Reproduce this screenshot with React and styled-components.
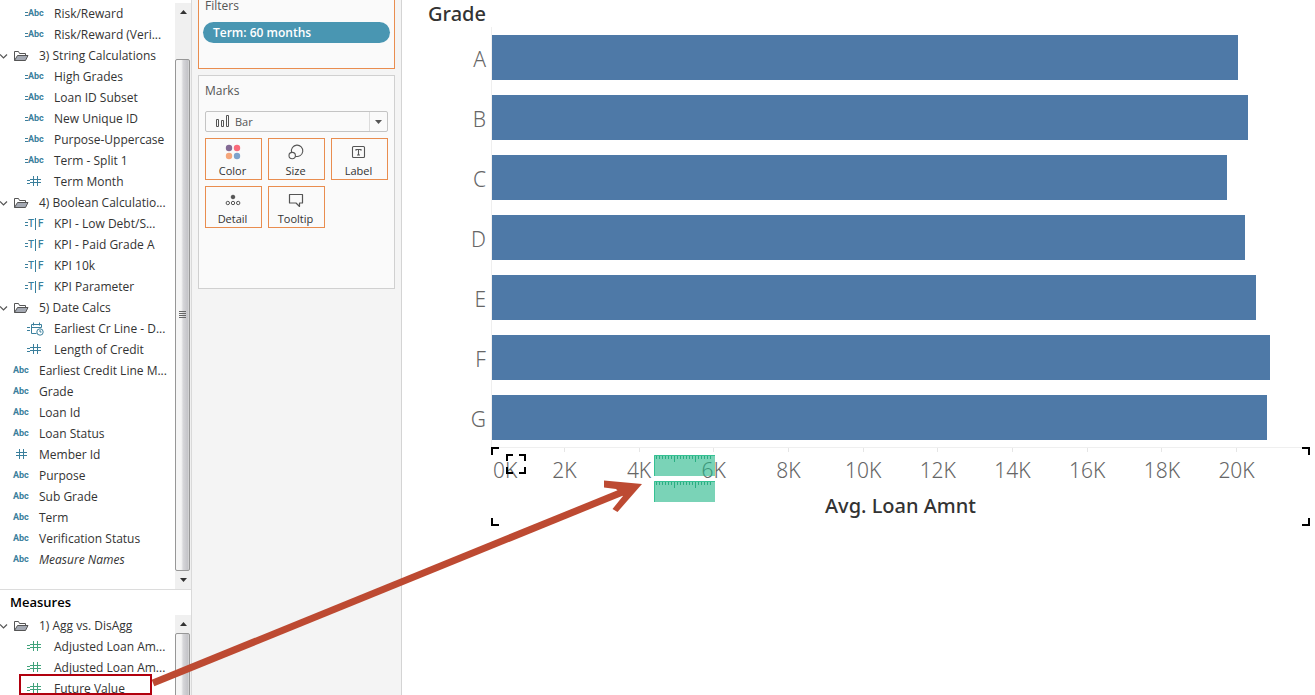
import React from "react";
import styled, { createGlobalStyle, css } from "styled-components";

const GlobalStyle = createGlobalStyle`
  *, *::before, *::after { box-sizing: border-box; }
  html, body { margin: 0; background: #fff; }
  body { font-family: "Open Sans", "Noto Sans", sans-serif; font-size: 12px; color: #333; overflow: hidden; }
  button, select { font: inherit; color: inherit; }
`;

const TEAL = "#3a7f9c";
const GREEN = "#41a37c";
const ORANGE = "#e98d4f";

const Page = styled.div`
  position: relative;
  display: flex;
  height: 100vh;
  overflow: hidden;
`;

/* ---------- data pane ---------- */

const DataPane = styled.aside`
  display: flex;
  flex-direction: column;
  flex: 0 0 192px;
  border-right: 1px solid #d9d9d9;
`;

const FieldSection = styled.section`
  display: flex;
  flex: none;
  padding-top: ${(p) => p.$top}px;
`;

const SectionTitle = styled.h2`
  flex: none;
  margin: 0;
  padding-left: 10px;
  border-top: 1px solid #dcdcdc;
  font-size: 13px;
  font-weight: 600;
  line-height: 25px;
  color: #000;
`;

const FieldList = styled.ul`
  flex: 1;
  min-width: 0;
  margin: 0;
  padding: 0 0 19px;
  list-style: none;
`;

const FieldItem = styled.li`
  position: relative;
  display: flex;
  align-items: center;
  height: 21px;
  padding-left: ${(p) => p.$indent}px;
  white-space: nowrap;
  font-style: ${(p) => (p.$italic ? "italic" : "normal")};
`;

const TypeIcon = styled.span`
  display: flex;
  align-items: center;
  flex: 0 0 ${(p) => (p.$nested ? 30 : 26)}px;
  color: ${(p) => p.$color};
  font: 700 9px/21px Roboto, sans-serif;
`;

const FolderButton = styled.button`
  display: flex;
  align-items: center;
  padding: 0;
  border: 0;
  background: none;
  svg { flex: none; margin-right: 6px; }
  svg + svg { margin-right: 10px; }
`;

const Highlight = styled.span`
  position: absolute;
  top: -4px;
  left: 19px;
  width: 133px;
  height: 21px;
  border: 2px solid #b1000e;
`;

const Scrollbar = styled.div`
  display: flex;
  flex-direction: column;
  flex: 0 0 16px;
  background: #f0f0f0;
`;

const ScrollArrow = styled.button`
  display: flex;
  align-items: center;
  justify-content: center;
  height: 18px;
  padding: 0;
  border: 0;
  background: #f0f0f0;
`;

const ScrollThumb = styled.div`
  display: flex;
  align-items: center;
  justify-content: center;
  flex: 1;
  margin: ${(p) => p.$before}px 1px 0 0;
  border: 1px solid #979797;
  border-radius: 2px;
  background: linear-gradient(90deg, #f5f5f5 0 40%, #d6d6d9 55%, #c4c4c8 90%, #dcdcdc);
`;

const Spacer = styled.i`
  width: ${(p) => (p.$wide ? 3 : 2)}px;
`;

const BarSeparator = styled.i`
  width: 1px;
  height: 12px;
  margin: 0 2px 0 1px;
  background: currentColor;
`;

const Letters = styled.span`
  font-weight: ${(p) => (p.$thin ? 500 : 700)};
  font-size: ${(p) => (p.$thin ? 10 : 9)}px;
`;

const Equals = () => (
  <svg width="4" height="7" viewBox="0 0 4 7" aria-hidden="true">
    <path d="M1 2.5h3M1 5.5h3" stroke="currentColor" />
  </svg>
);

const HashIcon = () => (
  <svg width="11" height="11" viewBox="0 0 11 11" aria-hidden="true">
    <path d="M3.5 0v10M7.5 0v10M0 3.5h11M0 6.5h11" stroke="currentColor" fill="none" />
  </svg>
);

const DateIcon = () => (
  <svg width="14" height="14" viewBox="0 0 14 14" fill="none" stroke="currentColor" aria-hidden="true">
    <path d="M6.5 11.5h-5v-9h10v3M1.5 5.5h10M3.5.5v3M9.5.5v3" />
    <circle cx="10" cy="10" r="3.2" />
    <path d="M10 8v2h1.5" />
  </svg>
);

function FieldIcon({ type, nested, color }) {
  return (
    <TypeIcon $nested={nested} $color={color}>
      {nested && (type === "hash" || type === "date") && <Spacer />}
      {nested && <Equals />}
      {!nested && type === "hash" && <Spacer $wide />}
      {type === "abc" && <Letters>Abc</Letters>}
      {type === "hash" && <HashIcon />}
      {type === "date" && <DateIcon />}
      {type === "bool" && (
        <>
          <Letters $thin>T</Letters>
          <BarSeparator />
          <Letters $thin>F</Letters>
        </>
      )}
    </TypeIcon>
  );
}

const Folder = ({ children }) => (
  <FieldItem $indent={0}>
    <FolderButton type="button">
      <svg width="8" height="8" viewBox="0 0 8 8" aria-hidden="true">
        <path d="M0 2.5l3.5 3.5L7 2.5" fill="none" stroke="#555" strokeWidth="1.2" />
      </svg>
      <svg width="15" height="12" viewBox="0 0 15 12" aria-hidden="true">
        <path d="M.5 10.5v-9h4l1 2h6v1.5" fill="none" stroke="#555" />
        <path d="M3.500 5.500h10.500l-2.500 5h-11z" fill="#a4a9b3" stroke="#555" />
      </svg>
      {children}
    </FolderButton>
  </FieldItem>
);

const UpArrow = () => (
  <ScrollArrow type="button" aria-label="Scroll up">
    <svg width="7" height="4" viewBox="0 0 7 4"><path d="M0 4l3.5-4L7 4z" fill="#333" /></svg>
  </ScrollArrow>
);

const DownArrow = () => (
  <ScrollArrow type="button" aria-label="Scroll down">
    <svg width="7" height="4" viewBox="0 0 7 4"><path d="M0 0h7L3.5 4z" fill="#333" /></svg>
  </ScrollArrow>
);

const dimensions = [
  ["abc", "Risk/Reward", true],
  ["abc", "Risk/Reward (Veri...", true],
  ["folder", "3) String Calculations"],
  ["abc", "High Grades", true],
  ["abc", "Loan ID Subset", true],
  ["abc", "New Unique ID", true],
  ["abc", "Purpose-Uppercase", true],
  ["abc", "Term - Split 1", true],
  ["hash", "Term Month", true],
  ["folder", "4) Boolean Calculatio..."],
  ["bool", "KPI - Low Debt/S...", true],
  ["bool", "KPI - Paid Grade A", true],
  ["bool", "KPI 10k", true],
  ["bool", "KPI Parameter", true],
  ["folder", "5) Date Calcs"],
  ["date", "Earliest Cr Line - D...", true],
  ["hash", "Length of Credit", true],
  ["abc", "Earliest Credit Line M..."],
  ["abc", "Grade"],
  ["abc", "Loan Id"],
  ["abc", "Loan Status"],
  ["hash", "Member Id"],
  ["abc", "Purpose"],
  ["abc", "Sub Grade"],
  ["abc", "Term"],
  ["abc", "Verification Status"],
  ["abc", "Measure Names"],
];

const measures = [
  ["folder", "1) Agg vs. DisAgg"],
  ["hash", "Adjusted Loan Am...", true],
  ["hash", "Adjusted Loan Am...", true],
  ["hash", "Future Value", true],
];

function Fields({ items, color }) {
  return (
    <FieldList>
      {items.map(([type, name, nested], i) =>
        type === "folder" ? (
          <Folder key={i}>{name}</Folder>
        ) : (
          <FieldItem key={i} $indent={nested ? 24 : 13} $italic={name === "Measure Names"}>
            <FieldIcon type={type} nested={nested} color={color} />
            {name}
            {name === "Future Value" && <Highlight />}
          </FieldItem>
        )
      )}
    </FieldList>
  );
}

/* ---------- shelves ---------- */

const Shelves = styled.div`
  display: flex;
  flex-direction: column;
  gap: 6px;
  flex: 0 0 210px;
  padding: 0 6px;
  border-right: 1px solid #d4d4d4;
  background: #f4f4f4;
`;

const Card = styled.section`
  flex: none;
  border: 1px solid #d0d0d0;
  background: #fafafa;
  ${(p) =>
    p.$active
      ? css`
          height: 69px;
          padding: 0 4px;
          border-color: ${ORANGE};
          border-top: 0;
        `
      : css`
          height: 214px;
          padding: 6px;
        `}
`;

const CardTitle = styled.h3`
  margin: 0 0 ${(p) => (p.$compact ? 10 : 11)}px;
  padding-left: ${(p) => (p.$compact ? 2 : 0)}px;
  font-size: 12px;
  font-weight: 400;
  line-height: ${(p) => (p.$compact ? 12 : 18)}px;
  color: #555;
`;

const Pill = styled.button`
  display: block;
  width: 100%;
  height: 21px;
  padding: 0 10px;
  border: 0;
  border-radius: 11px;
  background: #4996b2;
  color: #fff;
  font-weight: 600;
  line-height: 21px;
  text-align: left;
`;

const MarkTypeField = styled.label`
  position: relative;
  display: block;
  height: 21px;
  margin-bottom: 6px;
  svg { position: absolute; pointer-events: none; }
  svg:first-of-type { left: 10px; top: 4px; }
  svg:last-of-type { right: 6px; top: 9px; }
  &::after {
    content: "";
    position: absolute;
    right: 18px;
    top: 1px;
    bottom: 1px;
    border-left: 1px solid #dcdcdc;
  }
`;

const MarkTypeSelect = styled.select`
  display: block;
  width: 100%;
  height: 21px;
  padding: 0 20px 0 29px;
  appearance: none;
  border: 1px solid #c4c4c4;
  border-radius: 2px;
  background: #fafafa;
  color: #555;
  font-size: 11px;
`;

const MarkGrid = styled.div`
  display: grid;
  grid-template-columns: repeat(3, 57px);
  gap: 6px;
`;

const MarkButton = styled.button`
  display: flex;
  flex-direction: column;
  align-items: center;
  justify-content: space-between;
  height: 42px;
  padding: 5px 2px 1px 0;
  border: 1px solid ${ORANGE};
  background: #fafafa;
  font-size: 11px;
  line-height: 15px;
`;

const markIcons = {
  Color: (
    <>
      <circle cx="4" cy="4" r="3.200" fill="#836a94" />
      <circle cx="12" cy="4" r="3.200" fill="#f96b7b" />
      <circle cx="4" cy="12" r="3.200" fill="#f5a67b" />
      <circle cx="12" cy="12" r="3.200" fill="#7ea3cc" />
    </>
  ),
  Size: (
    <g fill="none" stroke="#555" strokeWidth="1.1">
      <path d="M3.600 8.300A5.700 5.700 0 1 1 7.300 12.200" />
      <circle cx="4.200" cy="11.600" r="3.200" />
    </g>
  ),
  Label: (
    <g fill="none" stroke="#555" strokeWidth="1.1">
      <rect x="1.500" y="2.500" width="12" height="11" rx="1" />
      <path d="M5 6.800V5.500h5v1.300M7.500 5.500v5.500M6 11h3" />
    </g>
  ),
  Detail: (
    <g fill="none" stroke="#555">
      <circle cx="8" cy="5" r="1.800" fill="#555" />
      <circle cx="2.800" cy="11" r="1.700" />
      <circle cx="8" cy="11" r="1.700" />
      <circle cx="13.200" cy="11" r="1.700" />
    </g>
  ),
  Tooltip: (
    <path d="M1.500 2.500h13v8.500h-3v3.500L8 11H1.500z" fill="none" stroke="#555" strokeWidth="1.2" strokeLinejoin="round" />
  ),
};

/* ---------- chart ---------- */

const Chart = styled.main`
  display: grid;
  grid-template-columns: 89px 1fr;
  grid-template-rows: 27px auto auto;
  align-content: start;
  flex: 1;
  min-width: 0;
  padding-right: 5px;
  font-family: "Noto Sans", sans-serif;
  font-size: 20px;
`;

const ChartHeader = styled.h1`
  grid-column: 1;
  margin: 0;
  padding-right: 5px;
  font-size: 20px;
  font-weight: 500;
  line-height: 27px;
  text-align: right;
  color: #333;
`;

const GradeLabels = styled.div`
  grid-column: 1;
  padding-right: 5px;
  font-size: 21px;
  font-weight: 300;
  line-height: 64px;
  text-align: right;
  color: #666;
`;

const GradeLabel = styled.div`
  height: 60px;
`;

const Plot = styled.div`
  grid-column: 2;
  border-left: 1px solid #efefef;
`;

const BarTrack = styled.div`
  height: 60px;
  padding-top: 8px;
`;

const Bar = styled.div`
  height: 45px;
  background: #4e79a7;
`;

const Axis = styled.div`
  position: relative;
  grid-column: 2;
  height: 79px;
  border-top: 1px solid #efefef;
`;

const Ticks = styled.div`
  display: flex;
`;

const Tick = styled.div`
  display: flex;
  flex-direction: column;
  align-items: ${(p) => (p.$first ? "flex-start" : "center")};
  flex: 0 0 ${(p) => (p.$first ? "4.4%" : "9.12%")};
  padding-left: ${(p) => (p.$first ? 2 : 0)}px;
  font-size: 21px;
  font-weight: 300;
  line-height: 36px;
  color: #666;
  &::before {
    content: "";
    height: 4px;
    border-left: 1px solid ${(p) => (p.$first ? "transparent" : "#e6e6e6")};
  }
`;

const AxisTitle = styled.div`
  font-weight: 500;
  line-height: 36px;
  text-align: center;
  color: #333;
`;

const Corner = styled.i`
  position: absolute;
  width: ${(p) => p.$size}px;
  height: ${(p) => p.$size}px;
  border: 0 solid #000;
  ${(p) => p.$at.split(" ").map((side) => `${side}: 0; border-${side}-width: 2px;`).join(" ")}
`;

const Selection = styled.div`
  position: absolute;
  inset: 0;
  margin-top: -1px;
`;

const DropCursor = styled.div`
  position: absolute;
  left: 15px;
  top: 6px;
  width: 20px;
  height: 20px;
`;

const Rulers = styled.div`
  position: absolute;
  top: 7px;
  left: 163px;
  display: flex;
  flex-direction: column;
  gap: 5px;
  svg { display: block; }
`;

const Corners = ({ size }) => (
  <>
    {["top left", "top right", "bottom left", "bottom right"].map((at) => (
      <Corner key={at} $at={at} $size={size} />
    ))}
  </>
);

const Ruler = () => (
  <svg width="61" height="21" viewBox="0 0 61 21" aria-hidden="true">
    <rect width="61" height="21" fill="#21b587" fillOpacity=".6" />
    <path d="M.5 21V.5H61" fill="none" stroke="#35c193" />
    {Array.from({ length: 19 }, (_, i) => (
      <path key={i} d={`M${2.5 + i * 3} 1v${i === 6 || i === 13 ? 6 : 3}`} stroke="#2bae82" />
    ))}
  </svg>
);

const Pointer = styled.svg`
  position: absolute;
  left: 0;
  top: 0;
  pointer-events: none;
`;

const grades = [
  ["A", 746],
  ["B", 756],
  ["C", 735],
  ["D", 753],
  ["E", 764],
  ["F", 778],
  ["G", 775],
];
const AXIS_SPAN = 818;
const ticks = ["0K", "2K", "4K", "6K", "8K", "10K", "12K", "14K", "16K", "18K", "20K"];

export default function App() {
  return (
    <Page>
      <GlobalStyle />
      <DataPane>
        <FieldSection $top={3}>
          <Fields items={dimensions} color={TEAL} />
          <Scrollbar>
            <UpArrow />
            <ScrollThumb $before={38}>
              <svg width="7" height="8" viewBox="0 0 7 8">
                <path d="M0 .5h7M0 2.500h7M0 4.500h7M0 6.500h7" stroke="#666" />
              </svg>
            </ScrollThumb>
            <DownArrow />
          </Scrollbar>
        </FieldSection>
        <SectionTitle>Measures</SectionTitle>
        <FieldSection $top={0}>
          <Fields items={measures} color={GREEN} />
          <Scrollbar>
            <UpArrow />
            <ScrollThumb $before={0} />
          </Scrollbar>
        </FieldSection>
      </DataPane>

      <Shelves>
        <Card $active>
          <CardTitle $compact>Filters</CardTitle>
          <Pill type="button">Term: 60 months</Pill>
        </Card>
        <Card>
          <CardTitle>Marks</CardTitle>
          <MarkTypeField>
            <MarkTypeSelect aria-label="Mark type" defaultValue="Bar">
              <option>Bar</option>
              <option>Line</option>
            </MarkTypeSelect>
            <svg width="14" height="13" viewBox="0 0 14 13" fill="none" stroke="#555">
              <path d="M1.500 4.500h2v7h-2zM6.500 5.500h2v6h-2zM11.500 .5h2v11h-2z" />
            </svg>
            <svg width="7" height="4" viewBox="0 0 7 4"><path d="M0 0h7L3.500 4z" fill="#555" /></svg>
          </MarkTypeField>
          <MarkGrid>
            {Object.entries(markIcons).map(([name, icon]) => (
              <MarkButton key={name} type="button">
                <svg width="16" height="16" viewBox="0 0 16 16" aria-hidden="true">{icon}</svg>
                {name}
              </MarkButton>
            ))}
          </MarkGrid>
        </Card>
      </Shelves>

      <Chart>
        <ChartHeader>Grade</ChartHeader>
        <GradeLabels>
          {grades.map(([name]) => (
            <GradeLabel key={name}>{name}</GradeLabel>
          ))}
        </GradeLabels>
        <Plot>
          {grades.map(([name, value]) => (
            <BarTrack key={name}>
              <Bar style={{ width: `${(value / AXIS_SPAN) * 100}%` }} />
            </BarTrack>
          ))}
        </Plot>
        <Axis>
          <Ticks>
            {ticks.map((label, i) => (
              <Tick key={label} $first={i === 0}>{label}</Tick>
            ))}
          </Ticks>
          <AxisTitle>Avg. Loan Amnt</AxisTitle>
          <Selection><Corners size={8} /></Selection>
          <DropCursor><Corners size={7} /></DropCursor>
          <Rulers><Ruler /><Ruler /></Rulers>
        </Axis>
      </Chart>

      <Pointer width="660" height="695" viewBox="0 0 660 695" aria-hidden="true">
        <path d="M153 683L630 489" stroke="#bd4a32" strokeWidth="7" />
        <path d="M604 480.500L642 484L617.500 512L612.500 509L623 496L616 489L604 487.500z" fill="#bd4a32" />
      </Pointer>
    </Page>
  );
}
